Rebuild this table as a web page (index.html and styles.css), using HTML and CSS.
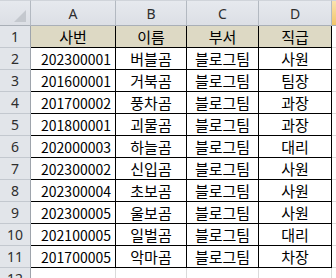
FILE: index.html
```html
<!DOCTYPE html>
<html lang="ko">
<head>
<meta charset="utf-8">
<link rel="stylesheet" href="styles.css">
</head>
<body>
<div class="sheet">
  <div class="ch corner"><span class="tri"></span></div>
  <div class="ch">A</div>
  <div class="ch">B</div>
  <div class="ch">C</div>
  <div class="ch">D</div>
  <div class="ch sel"></div>

  <div class="rh">1</div>
  <div class="c h">사번</div><div class="c h">이름</div><div class="c h">부서</div><div class="c h">직급</div><div class="c e"></div>

  <div class="rh">2</div>
  <div class="c num">202300001</div><div class="c">버블곰</div><div class="c">블로그팀</div><div class="c">사원</div><div class="c e"></div>

  <div class="rh">3</div>
  <div class="c num">201600001</div><div class="c">거북곰</div><div class="c">블로그팀</div><div class="c">팀장</div><div class="c e"></div>

  <div class="rh">4</div>
  <div class="c num">201700002</div><div class="c">풍차곰</div><div class="c">블로그팀</div><div class="c">과장</div><div class="c e"></div>

  <div class="rh">5</div>
  <div class="c num">201800001</div><div class="c">괴물곰</div><div class="c">블로그팀</div><div class="c">과장</div><div class="c e"></div>

  <div class="rh">6</div>
  <div class="c num">202000003</div><div class="c">하늘곰</div><div class="c">블로그팀</div><div class="c">대리</div><div class="c e"></div>

  <div class="rh">7</div>
  <div class="c num">202300002</div><div class="c">신입곰</div><div class="c">블로그팀</div><div class="c">사원</div><div class="c e"></div>

  <div class="rh">8</div>
  <div class="c num">202300004</div><div class="c">초보곰</div><div class="c">블로그팀</div><div class="c">사원</div><div class="c e"></div>

  <div class="rh">9</div>
  <div class="c num">202300005</div><div class="c">울보곰</div><div class="c">블로그팀</div><div class="c">사원</div><div class="c e"></div>

  <div class="rh">10</div>
  <div class="c num">202100005</div><div class="c">일벌곰</div><div class="c">블로그팀</div><div class="c">대리</div><div class="c e"></div>

  <div class="rh">11</div>
  <div class="c num">201700005</div><div class="c">악마곰</div><div class="c">블로그팀</div><div class="c">차장</div><div class="c e"></div>

  <div class="rh">12</div>
  <div class="c blank"></div><div class="c blank"></div><div class="c blank"></div><div class="c blank"></div><div class="c e"></div>
</div>
</body>
</html>
```
FILE: styles.css
```css
html, body {
  margin: 0;
  padding: 0;
  background: #ffffff;
  overflow: hidden;
}

.sheet {
  display: grid;
  grid-template-columns: 31px 85px 71px 72px 73px 1fr;
  grid-template-rows: 26px repeat(12, 22px);
  width: 336px;
  font-family: "Noto Sans CJK KR", "Noto Sans", sans-serif;
}

.ch, .rh, .c {
  box-sizing: border-box;
  display: flex;
  align-items: center;
  justify-content: center;
  overflow: hidden;
  white-space: nowrap;
}

.ch {
  background: linear-gradient(#e6e9ee, #dcdfe5);
  border-top: 1px solid #d0d4da;
  border-right: 1px solid #b3b9c1;
  border-bottom: 1px solid #a9afb7;
  color: #2e2e2e;
  font-family: "Noto Sans", sans-serif;
  font-size: 14px;
  padding-top: 1px;
}

.ch.corner {
  position: relative;
}

.tri {
  position: absolute;
  right: 4px;
  bottom: 3px;
  width: 0;
  height: 0;
  border-left: 12px solid transparent;
  border-bottom: 12px solid #c4c8ce;
}

.ch.sel {
  background: linear-gradient(#fbe3ae, #f2c56a);
  border-right: none;
}

.rh {
  background: #e2e5ea;
  border-right: 1px solid #9ea4ac;
  border-bottom: 1px solid #c3c8cf;
  color: #2e2e2e;
  font-family: "Noto Sans", sans-serif;
  font-size: 14px;
}

.c {
  border-right: 1px solid #000000;
  border-bottom: 1px solid #000000;
  color: #000000;
  font-size: 15px;
}

.c.h {
  background: #ddd9c4;
}

.c.num {
  justify-content: flex-end;
  padding-right: 4px;
  font-size: 14px;
}

.c.e {
  border-right: none;
  border-bottom: 1px solid #dadada;
}

.c.blank {
  border-right: 1px solid #dadada;
  border-bottom: 1px solid #dadada;
}
```
